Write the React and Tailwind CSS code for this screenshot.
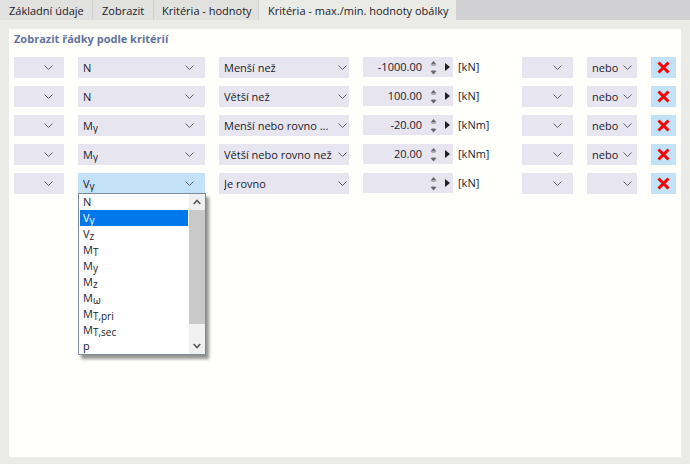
const font = { fontFamily: '"Open Sans", "Liberation Sans", sans-serif' };

const rows = [
  { quantity: ["N"], condition: "Menší než", value: "-1000.00", unit: "[kN]", logic: "nebo" },
  { quantity: ["N"], condition: "Větší než", value: "100.00", unit: "[kN]", logic: "nebo" },
  { quantity: ["M", "y"], condition: "Menší nebo rovno ...", value: "-20.00", unit: "[kNm]", logic: "nebo" },
  { quantity: ["M", "y"], condition: "Větší nebo rovno než", value: "20.00", unit: "[kNm]", logic: "nebo" },
  { quantity: ["V", "y"], condition: "Je rovno", value: "", unit: "[kN]", logic: "", open: true },
];

const options = [
  ["N"],
  ["V", "y"],
  ["V", "z"],
  ["M", "T"],
  ["M", "y"],
  ["M", "z"],
  ["M", "ω"],
  ["M", "T,pri"],
  ["M", "T,sec"],
  ["p"],
];

function Chevron() {
  return (
    <svg width="9" height="5" viewBox="0 0 9 5" className="shrink-0" fill="none" stroke="#5f5f66" strokeWidth="1">
      <path d="M0.5 0.5 L4.5 4.5 L8.5 0.5" />
    </svg>
  );
}

function Quantity({ parts }) {
  return (
    <span className="whitespace-nowrap">
      {parts[0]}
      {parts[1] && <span className="relative top-[2px] text-[10px]">{parts[1]}</span>}
    </span>
  );
}

function Select({ width, children, active, pad = "pr-[11px]" }) {
  return (
    <div
      className={`flex h-[21px] ${width} shrink-0 items-center justify-between pl-[5px] ${pad} ${active ? "bg-[#c3e1f7]" : "bg-[#e7e6f0]"}`}
    >
      <span className="truncate pt-px">{children}</span>
      <Chevron />
    </div>
  );
}

function Stepper() {
  return (
    <div className="flex items-center gap-[8px]">
      <svg width="7" height="15" viewBox="0 0 7 15" fill="#66666c">
        <path d="M3.5 1 L6.5 4.5 L0.5 4.5 Z" />
        <path d="M1.5 5 H5.5 V6 H1.5 Z" opacity="0.45" />
        <path d="M1.5 10 H5.5 V11 H1.5 Z" opacity="0.45" />
        <path d="M0.5 11 L6.5 11 L3.5 14.5 Z" />
      </svg>
      <svg width="5" height="8" viewBox="0 0 5 8" fill="#222">
        <path d="M0 0 L5 4 L0 8 Z" />
      </svg>
    </div>
  );
}

function FilterRow({ row }) {
  return (
    <div className="flex items-start gap-[14px]">
      <Select width="w-[50px]" />
      <div className="relative">
        <Select width="w-[127px]" active={row.open}>
          <Quantity parts={row.quantity} />
        </Select>
        {row.open && <Dropdown />}
      </div>
      <Select width="w-[130px]" pad="pr-[2px]">
        {row.condition}
      </Select>
      <div className="flex h-[20px] w-[90px] shrink-0 items-center justify-end gap-[8px] bg-[#e7e6f0] pr-[3px]">
        <span>{row.value}</span>
        <Stepper />
      </div>
      <div className="-ml-[14px] h-[20px] w-[55px] shrink-0 pl-[5px] leading-[19px]">{row.unit}</div>
      <Select width="w-[51px]" />
      <Select width="w-[50px]" pad="pr-[5px]">
        {row.logic}
      </Select>
      <div className="flex h-[21px] w-[25px] shrink-0 items-center justify-center bg-[#c3e1f7]">
        <svg width="13" height="13" viewBox="0 0 13 13" stroke="#f80000" strokeWidth="3" fill="none">
          <path d="M1.5 1.5 L11.5 11.5 M11.5 1.5 L1.5 11.5" />
        </svg>
      </div>
    </div>
  );
}

function Dropdown() {
  return (
    <div className="absolute left-0 top-[20px] z-10 flex h-[162px] w-[128px] gap-px border border-[#7b8a96] bg-white pl-px shadow-[3px_4px_3px_rgba(90,90,90,0.65)]">
      <ul className="w-[108px]">
        {options.map((option, i) => (
          <li
            key={i}
            className={`flex h-[16px] items-center pl-[3px] ${i === 1 ? "bg-[#0078ec] text-white" : ""}`}
          >
            <Quantity parts={option} />
          </li>
        ))}
      </ul>
      <div className="flex w-[16px] flex-col bg-[#f0f0f0]">
        <div className="flex h-[16px] items-center justify-center">
          <svg width="8" height="6" viewBox="0 0 8 6" fill="none" stroke="#555" strokeWidth="1.6">
            <path d="M0.7 5 L4 1.5 L7.3 5" />
          </svg>
        </div>
        <div className="h-[114px] bg-[#c9c9c9]" />
        <div className="flex flex-1 items-end justify-center pb-[5px]">
          <svg width="8" height="6" viewBox="0 0 8 6" fill="none" stroke="#555" strokeWidth="1.6">
            <path d="M0.7 1 L4 4.5 L7.3 1" />
          </svg>
        </div>
      </div>
    </div>
  );
}

const tabs = ["Základní údaje", "Zobrazit", "Kritéria - hodnoty", "Kritéria - max./min. hodnoty obálky"];

export default function App() {
  return (
    <div className="flex h-[464px] w-[690px] flex-col overflow-hidden bg-[#eaeae6] text-[11px] text-[#1a1a2a]" style={font}>
      <div className="flex h-[20px] bg-[#d1d1d3]">
        {tabs.map((tab, i) => (
          <div
            key={tab}
            className={`flex items-center whitespace-nowrap pt-[2px] ${i === 3 ? "h-[21px] bg-[#eaeae6]" : "mr-px h-full bg-[#e1e1df]"} ${["w-[92px] pl-[9px]", "w-[60px] pl-[9px]", "w-[104px] pl-[8px]", "w-[197px] pl-[9px]"][i]}`}
          >
            {tab}
          </div>
        ))}
      </div>
      <div className="mx-[9px] mb-[7px] mt-[9px] flex-1 bg-[#fffffb] pl-[5px]">
        <h2 className="h-[28px] pt-[1px] text-[11px] font-bold leading-[18px] text-[#63729f]">Zobrazit řádky podle kritérií</h2>
        <div className="flex flex-col gap-[8px]">
          {rows.map((row, i) => (
            <FilterRow key={i} row={row} />
          ))}
        </div>
      </div>
    </div>
  );
}
